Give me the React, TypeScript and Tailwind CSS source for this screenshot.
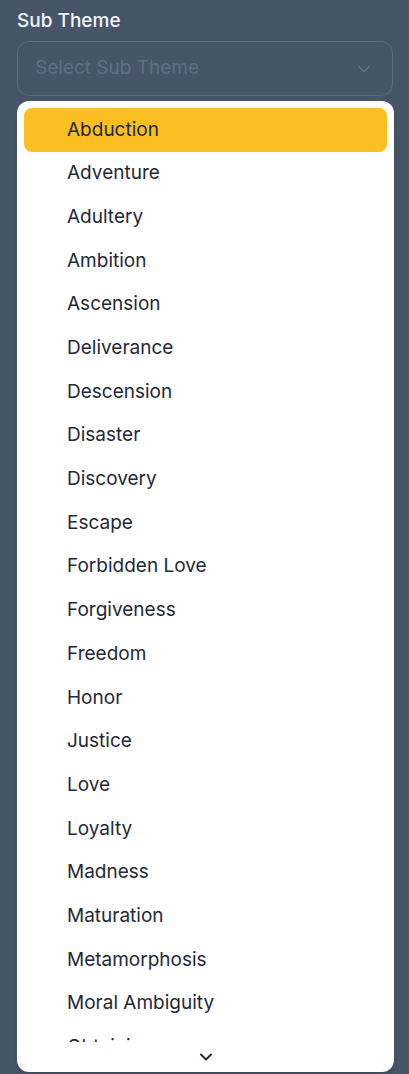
import React from 'react';
import { ChevronDown } from 'lucide-react';

const themes = [
  'Abduction',
  'Adventure',
  'Adultery',
  'Ambition',
  'Ascension',
  'Deliverance',
  'Descension',
  'Disaster',
  'Discovery',
  'Escape',
  'Forbidden Love',
  'Forgiveness',
  'Freedom',
  'Honor',
  'Justice',
  'Love',
  'Loyalty',
  'Madness',
  'Maturation',
  'Metamorphosis',
  'Moral Ambiguity',
  'Obtaining',
  'Persecution',
];

export default function App() {
  return (
    <div
      className="h-[1074px] w-full overflow-hidden bg-[#475569] px-[17px] pt-[7px]"
      style={{ fontFamily: 'Inter, "Noto Sans", sans-serif' }}
    >
      {/* Label */}
      <label className="block text-[19px] font-medium leading-7 text-[#f1f5f9]">Sub Theme</label>

      {/* Select trigger */}
      <div className="mt-[6px] flex h-[55px] w-[376px] items-center justify-between rounded-xl border border-[#5b6a80] pl-[17px] pr-[18px]">
        <span className="text-[19px] text-[#5f6e84]">Select Sub Theme</span>
        <ChevronDown className="h-5 w-5 text-[#64748b]" strokeWidth={1.5} />
      </div>

      {/* Dropdown */}
      <div className="mt-[5px] w-[377px] overflow-hidden rounded-xl bg-white shadow-lg">
        <div className="h-[941px] overflow-hidden p-[7px]">
          {themes.map((t, i) => (
            <div
              key={t}
              className={`flex h-[43.7px] items-center rounded-lg pl-[43px] text-[19px] ${
                i === 0 ? 'bg-[#fbbf24] text-[#1f2937]' : 'text-[#1f2937]'
              }`}
            >
              {t}
            </div>
          ))}
        </div>
        <div className="flex h-[30px] items-center justify-center pl-[1px]">
          <ChevronDown className="h-5 w-5 text-[#1f2937]" strokeWidth={2.25} />
        </div>
      </div>
    </div>
  );
}
